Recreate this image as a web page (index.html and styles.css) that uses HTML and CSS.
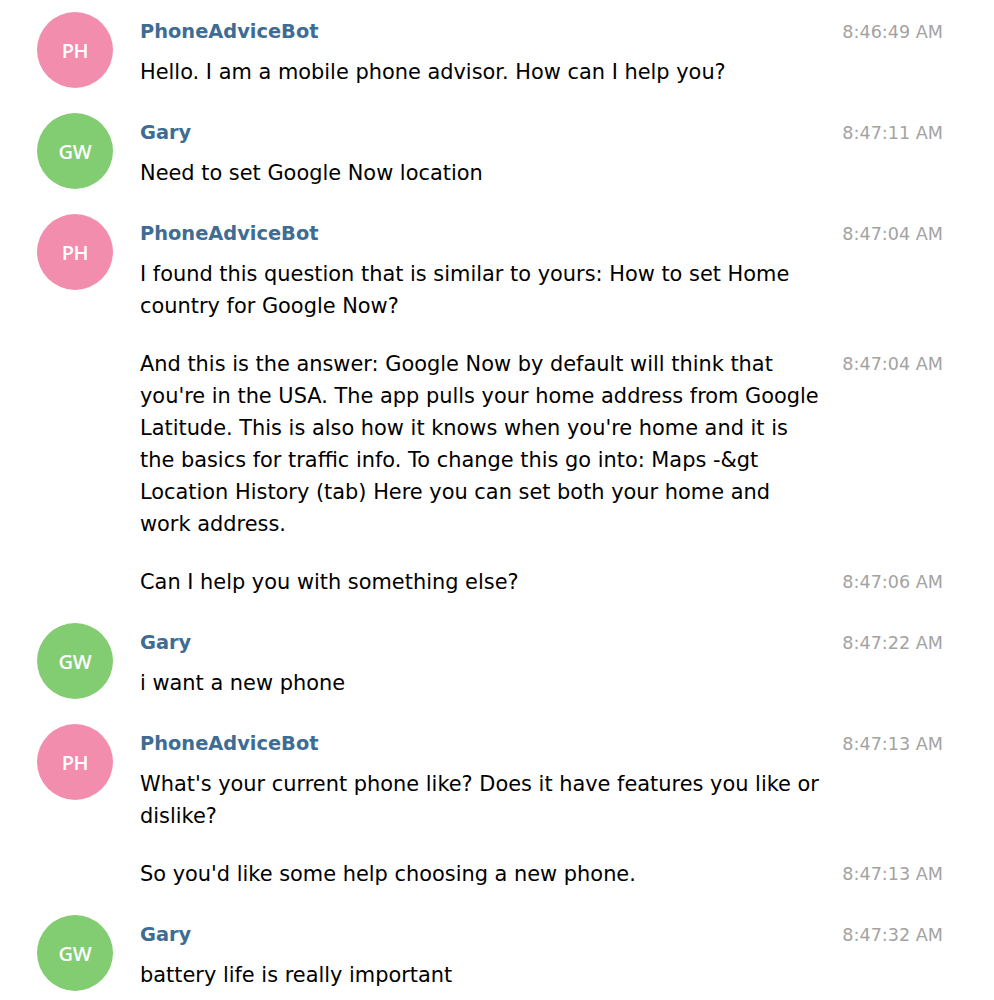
FILE: index.html
```html
<!DOCTYPE html>
<html lang="en">
<head>
<meta charset="utf-8">
<title>Chat</title>
<link rel="stylesheet" href="styles.css">
</head>
<body>
<div class="chat">

  <div class="group">
    <div class="avatar pink">PH</div>
    <div class="body">
      <div class="msg first">
        <div class="content">
          <div class="name">PhoneAdviceBot</div>
          <div class="text">Hello. I am a mobile phone advisor. How can I help you?</div>
        </div>
        <div class="time">8:46:49 AM</div>
      </div>
    </div>
  </div>

  <div class="group">
    <div class="avatar green">GW</div>
    <div class="body">
      <div class="msg first">
        <div class="content">
          <div class="name">Gary</div>
          <div class="text">Need to set Google Now location</div>
        </div>
        <div class="time">8:47:11 AM</div>
      </div>
    </div>
  </div>

  <div class="group">
    <div class="avatar pink">PH</div>
    <div class="body">
      <div class="msg first">
        <div class="content">
          <div class="name">PhoneAdviceBot</div>
          <div class="text">I found this question that is similar to yours: How to set Home country for Google Now?</div>
        </div>
        <div class="time">8:47:04 AM</div>
      </div>
      <div class="msg">
        <div class="content">
          <div class="text">And this is the answer: Google Now by default will think that you're in the USA. The app pulls your home address from Google Latitude. This is also how it knows when you're home and it is the basics for traffic info. To change this go into: Maps -&amp;gt Location History (tab) Here you can set both your home and work address.</div>
        </div>
        <div class="time">8:47:04 AM</div>
      </div>
      <div class="msg">
        <div class="content">
          <div class="text">Can I help you with something else?</div>
        </div>
        <div class="time">8:47:06 AM</div>
      </div>
    </div>
  </div>

  <div class="group">
    <div class="avatar green">GW</div>
    <div class="body">
      <div class="msg first">
        <div class="content">
          <div class="name">Gary</div>
          <div class="text">i want a new phone</div>
        </div>
        <div class="time">8:47:22 AM</div>
      </div>
    </div>
  </div>

  <div class="group">
    <div class="avatar pink">PH</div>
    <div class="body">
      <div class="msg first">
        <div class="content">
          <div class="name">PhoneAdviceBot</div>
          <div class="text">What's your current phone like? Does it have features you like or dislike?</div>
        </div>
        <div class="time">8:47:13 AM</div>
      </div>
      <div class="msg">
        <div class="content">
          <div class="text">So you'd like some help choosing a new phone.</div>
        </div>
        <div class="time">8:47:13 AM</div>
      </div>
    </div>
  </div>

  <div class="group">
    <div class="avatar green">GW</div>
    <div class="body">
      <div class="msg first">
        <div class="content">
          <div class="name">Gary</div>
          <div class="text">battery life is really important</div>
        </div>
        <div class="time">8:47:32 AM</div>
      </div>
    </div>
  </div>

</div>
</body>
</html>
```

FILE: styles.css
```css
html, body {
  margin: 0;
  padding: 0;
  background: #ffffff;
}

body {
  font-family: "DejaVu Sans", "Liberation Sans", sans-serif;
  color: #000000;
}

.chat {
  display: flex;
  flex-direction: column;
  gap: 25px;
  padding: 12px 51px 20px 37px;
}

.group {
  display: flex;
  align-items: flex-start;
  gap: 27px;
}

.avatar {
  flex: 0 0 76px;
  width: 76px;
  height: 76px;
  border-radius: 50%;
  display: flex;
  align-items: center;
  justify-content: center;
  color: #ffffff;
  font-family: "Open Sans", "DejaVu Sans", sans-serif;
  font-weight: 600;
  font-size: 20px;
  letter-spacing: -0.3px;
}

.avatar.pink {
  background: #f38dae;
}

.avatar.green {
  background: #82cc71;
}

.body {
  flex: 1;
  display: flex;
  flex-direction: column;
  gap: 26px;
}

.msg {
  display: flex;
  align-items: flex-start;
}

.content {
  flex: 0 0 684px;
  width: 684px;
}

.name {
  font-weight: bold;
  font-size: 19.4px;
  line-height: 36px;
  padding-top: 2px;
  margin-bottom: 6px;
  color: #3e6c94;
}

.text {
  font-size: 20.9px;
  line-height: 32px;
  color: #000000;
}

.time {
  flex: 1;
  text-align: right;
  font-size: 17.6px;
  line-height: 32px;
  color: #a3a3a3;
  white-space: nowrap;
}

.msg.first .time {
  padding-top: 2px;
  line-height: 36px;
}
```
